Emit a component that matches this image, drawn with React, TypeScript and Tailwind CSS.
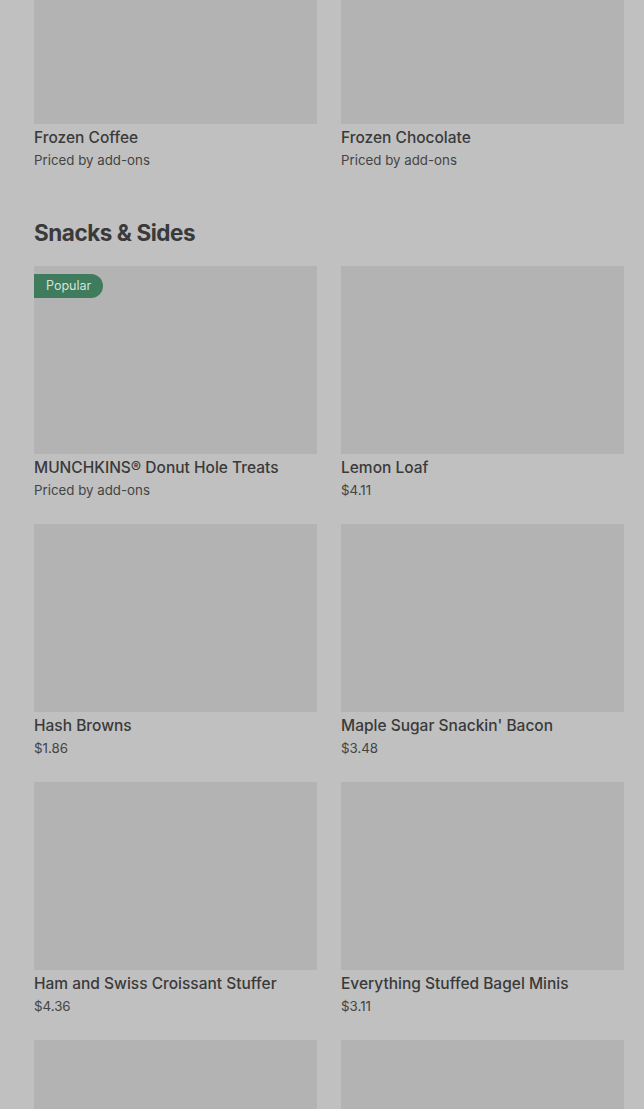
import React from 'react';

type Item = { name: string; price: string; popular?: boolean };

const topRow: Item[] = [
  { name: 'Frozen Coffee', price: 'Priced by add-ons' },
  { name: 'Frozen Chocolate', price: 'Priced by add-ons' },
];

const snacks: Item[] = [
  { name: 'MUNCHKINS® Donut Hole Treats', price: 'Priced by add-ons', popular: true },
  { name: 'Lemon Loaf', price: '$4.11' },
  { name: 'Hash Browns', price: '$1.86' },
  { name: "Maple Sugar Snackin' Bacon", price: '$3.48' },
  { name: 'Ham and Swiss Croissant Stuffer', price: '$4.36' },
  { name: 'Everything Stuffed Bagel Minis', price: '$3.11' },
  { name: '', price: '' },
  { name: '', price: '' },
];

function MenuCard({ item }: { item: Item }) {
  return (
    <div className="flex flex-col">
      <div className="relative h-[188px] bg-[#b3b3b3]">
        {item.popular && (
          <span className="absolute left-0 top-[8px] flex h-[24px] items-center rounded-r-full bg-[#3f7b5d] pl-[12px] pr-[12px] text-[12.5px] text-[#d4e3da]">
            Popular
          </span>
        )}
      </div>
      <div className="h-[70px] pt-[3px]">
        {item.name && (
          <>
            <p className="text-[15.5px] leading-[22px] font-medium text-[#3a3a3a]">{item.name}</p>
            <p className="text-[13.3px] leading-[22px] text-[#444444]">{item.price}</p>
          </>
        )}
      </div>
    </div>
  );
}

export default function App() {
  return (
    <div
      className="h-[1109px] overflow-hidden bg-[#c0c0c0] pl-[34px] pr-[20px]"
      style={{ fontFamily: 'Inter, "Noto Sans", sans-serif' }}
    >
      <div className="-mt-[64px] grid grid-cols-2 gap-x-[24px]">
        {topRow.map((it) => (
          <MenuCard key={it.name} item={it} />
        ))}
      </div>
      <h2 className="mt-[23px] text-[22.5px] leading-[32px] font-bold tracking-[-0.02em] text-[#3a3a3a]">
        Snacks &amp; Sides
      </h2>
      <div className="mt-[17px] grid grid-cols-2 gap-x-[24px]">
        {snacks.map((it, i) => (
          <MenuCard key={i} item={it} />
        ))}
      </div>
    </div>
  );
}
